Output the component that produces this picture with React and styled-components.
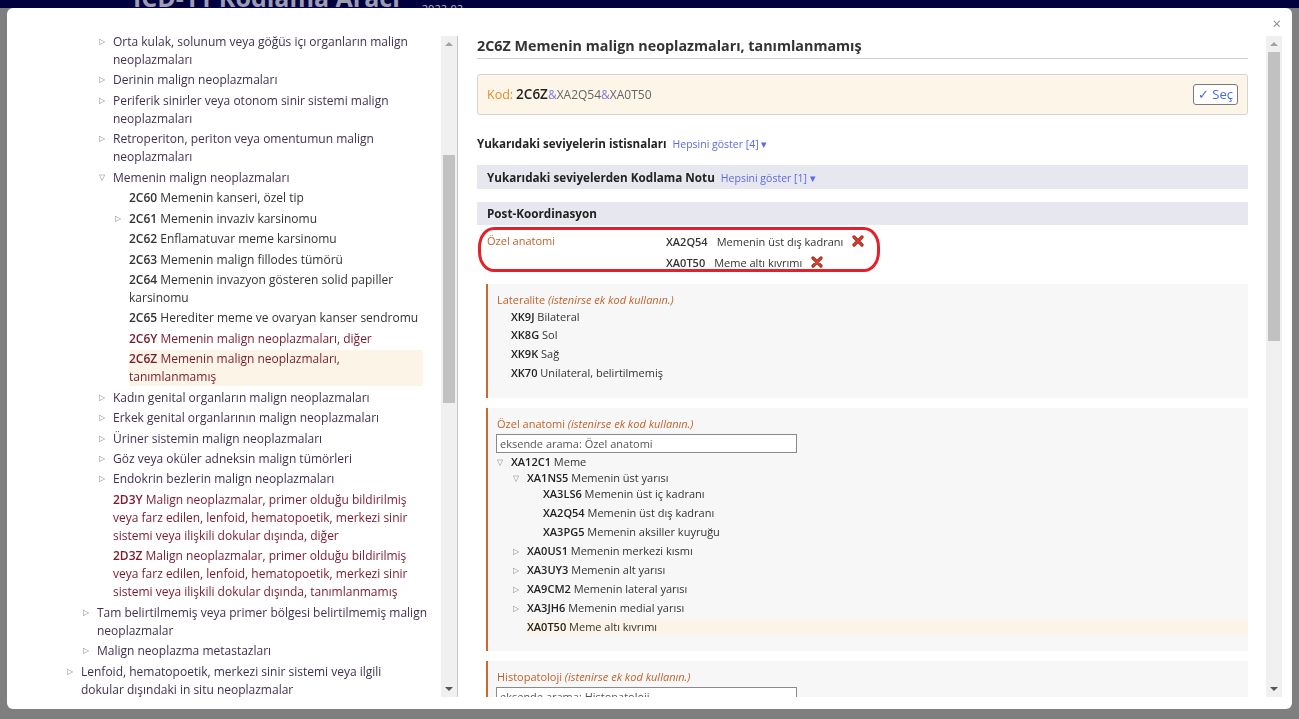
import React from 'react'
import styled, { createGlobalStyle } from 'styled-components'

const GlobalStyle = createGlobalStyle`
html, body {
  margin:0;
  padding:0;
  height:100%;
}
body {
  background:#7f7f7f;
  font-family:"Open Sans", "Liberation Sans", sans-serif;
  overflow:hidden;
}
`

// each label is stored with its line breaks, as the tree shows it
const leftRows = [
  { level: 2, toggle: 'closed', lines: ['Orta kulak, solunum veya göğüs içı organların malign', 'neoplazmaları'] },
  { level: 2, toggle: 'closed', lines: ['Derinin malign neoplazmaları'] },
  { level: 2, toggle: 'closed', lines: ['Periferik sinirler veya otonom sinir sistemi malign', 'neoplazmaları'] },
  { level: 2, toggle: 'closed', lines: ['Retroperiton, periton veya omentumun malign', 'neoplazmaları'] },
  { level: 2, toggle: 'open', lines: ['Memenin malign neoplazmaları'] },
  { level: 3, code: '2C60', lines: ['Memenin kanseri, özel tip'] },
  { level: 3, toggle: 'closed', code: '2C61', lines: ['Memenin invaziv karsinomu'] },
  { level: 3, code: '2C62', lines: ['Enflamatuvar meme karsinomu'] },
  { level: 3, code: '2C63', lines: ['Memenin malign fillodes tümörü'] },
  { level: 3, code: '2C64', lines: ['Memenin invazyon gösteren solid papiller', 'karsinomu'] },
  { level: 3, code: '2C65', lines: ['Herediter meme ve ovaryan kanser sendromu'] },
  { level: 3, code: '2C6Y', lines: ['Memenin malign neoplazmaları, diğer'], residual: true },
  { level: 3, code: '2C6Z', lines: ['Memenin malign neoplazmaları,', 'tanımlanmamış'], residual: true, selected: true },
  { level: 2, toggle: 'closed', lines: ['Kadın genital organların malign neoplazmaları'] },
  { level: 2, toggle: 'closed', lines: ['Erkek genital organlarının malign neoplazmaları'] },
  { level: 2, toggle: 'closed', lines: ['Üriner sistemin malign neoplazmaları'] },
  { level: 2, toggle: 'closed', lines: ['Göz veya oküler adneksin malign tümörleri'] },
  { level: 2, toggle: 'closed', lines: ['Endokrin bezlerin malign neoplazmaları'] },
  {
    level: 2, code: '2D3Y', residual: true,
    lines: ['Malign neoplazmalar, primer olduğu bildirilmiş', 'veya farz edilen, lenfoid, hematopoetik, merkezi sinir', 'sistemi veya ilişkili dokular dışında, diğer'],
  },
  {
    level: 2, code: '2D3Z', residual: true,
    lines: ['Malign neoplazmalar, primer olduğu bildirilmiş', 'veya farz edilen, lenfoid, hematopoetik, merkezi sinir', 'sistemi veya ilişkili dokular dışında, tanımlanmamış'],
  },
  { level: 1, toggle: 'closed', lines: ['Tam belirtilmemiş veya primer bölgesi belirtilmemiş malign', 'neoplazmalar'] },
  { level: 1, toggle: 'closed', lines: ['Malign neoplazma metastazları'] },
  { level: 0, toggle: 'closed', lines: ['Lenfoid, hematopoetik, merkezi sinir sistemi veya ilgili', 'dokular dışındaki in situ neoplazmalar'] },
]

const postValues = [
  { code: 'XA2Q54', text: 'Memenin üst dış kadranı' },
  { code: 'XA0T50', text: 'Meme altı kıvrımı' },
]

const laterality = [
  { code: 'XK9J', text: 'Bilateral' },
  { code: 'XK8G', text: 'Sol' },
  { code: 'XK9K', text: 'Sağ' },
  { code: 'XK70', text: 'Unilateral, belirtilmemiş' },
]

const anatomy = [
  { level: 0, toggle: 'open', code: 'XA12C1', text: 'Meme' },
  { level: 1, toggle: 'open', code: 'XA1NS5', text: 'Memenin üst yarısı' },
  { level: 2, code: 'XA3LS6', text: 'Memenin üst iç kadranı' },
  { level: 2, code: 'XA2Q54', text: 'Memenin üst dış kadranı' },
  { level: 2, code: 'XA3PG5', text: 'Memenin aksiller kuyruğu' },
  { level: 1, toggle: 'closed', code: 'XA0US1', text: 'Memenin merkezi kısmı' },
  { level: 1, toggle: 'closed', code: 'XA3UY3', text: 'Memenin alt yarısı' },
  { level: 1, toggle: 'closed', code: 'XA9CM2', text: 'Memenin lateral yarısı' },
  { level: 1, toggle: 'closed', code: 'XA3JH6', text: 'Memenin medial yarısı' },
  { level: 1, code: 'XA0T50', text: 'Meme altı kıvrımı', selected: true },
]

function ScrollBar({ offset, size }) {
  return (
    <Bar>
      <ScrollArrow />
      <ScrollTrack>
        <ScrollThumb $offset={offset} $size={size} />
      </ScrollTrack>
      <ScrollArrow $down />
    </Bar>
  )
}

function RemoveIcon() {
  return (
    <RemoveButton>
      <svg width="12" height="12" viewBox="0 0 12 12">
        <path d="M2 2 L10 10 M10 2 L2 10" stroke="#a3241a" strokeWidth="3.2" strokeLinecap="round" />
        <path d="M2 2 L10 10 M10 2 L2 10" stroke="#d8452f" strokeWidth="1.6" strokeLinecap="round" />
      </svg>
    </RemoveButton>
  )
}

function toggleGlyph(t) {
  if (t === 'open') return '▽'
  if (t === 'closed') return '▷'
  return ''
}

function App() {
  return (
    <>
      <GlobalStyle />
      <Header>
        <SiteTitle>ICD-11 Kodlama Aracı</SiteTitle>
        <Version>2022-02</Version>
      </Header>
      <Modal>
        <Close>×</Close>
        <Body>
          <LeftPane>
            <TreeArea>
              <TreeList>
                {leftRows.map((r, i) => (
                  <Row key={i} $level={r.level}>
                    <Toggle>{toggleGlyph(r.toggle)}</Toggle>
                    <Label $kind={r.residual ? 'residual' : r.code ? 'code' : 'block'} $selected={r.selected}>
                      {r.lines.map((line, j) => (
                        <Line key={j}>
                          {j === 0 && r.code && <LeftCode>{r.code} </LeftCode>}
                          {line}
                        </Line>
                      ))}
                    </Label>
                  </Row>
                ))}
              </TreeList>
            </TreeArea>
            <ScrollBar offset={103} size={248} />
          </LeftPane>

          <RightPane>
            <Content>
              <Title>2C6Z Memenin malign neoplazmaları, tanımlanmamış</Title>

              <CodeBox>
                <CodeLine>
                  <KodLabel>Kod:</KodLabel>
                  <MainCode>2C6Z</MainCode>
                  <Amp>&amp;</Amp>
                  <ExtCode>XA2Q54</ExtCode>
                  <Amp>&amp;</Amp>
                  <ExtCode>XA0T50</ExtCode>
                </CodeLine>
                <SelectButton>✓ Seç</SelectButton>
              </CodeBox>

              <SectionHead>
                Yukarıdaki seviyelerin istisnaları
                <ShowAll>Hepsini göster [4] ▾</ShowAll>
              </SectionHead>

              <Band $top={12} $height={24}>
                Yukarıdaki seviyelerden Kodlama Notu
                <ShowAll>Hepsini göster [1] ▾</ShowAll>
              </Band>

              <Band $top={13} $height={23}>Post-Koordinasyon</Band>

              <PostCoordBox>
                <AxisLabel>Özel anatomi</AxisLabel>
                <div>
                  {postValues.map(v => (
                    <ValueRow key={v.code}>
                      <ValueCode>{v.code}</ValueCode>
                      <span>{v.text}</span>
                      <RemoveIcon />
                    </ValueRow>
                  ))}
                </div>
              </PostCoordBox>

              <AxisPanel $top={12} $bottom={16}>
                <AxisTitle>Lateralite <em>(istenirse ek kod kullanın.)</em></AxisTitle>
                {laterality.map(l => (
                  <LatItem key={l.code}><AxisCode>{l.code}</AxisCode> {l.text}</LatItem>
                ))}
              </AxisPanel>

              <AxisPanel $top={10} $bottom={13}>
                <AxisTitle>Özel anatomi <em>(istenirse ek kod kullanın.)</em></AxisTitle>
                <SearchInput placeholder="eksende arama: Özel anatomi" />
                {anatomy.map(a => (
                  <AxisRow key={a.code} $level={a.level} $open={a.toggle === 'open'}>
                    <AxisToggle>{toggleGlyph(a.toggle)}</AxisToggle>
                    <AxisLabelText $selected={a.selected}>
                      <AxisCode>{a.code}</AxisCode> {a.text}
                    </AxisLabelText>
                  </AxisRow>
                ))}
              </AxisPanel>

              <AxisPanel $top={10} $bottom={13}>
                <AxisTitle>Histopatoloji <em>(istenirse ek kod kullanın.)</em></AxisTitle>
                <SearchInput placeholder="eksende arama: Histopatoloji" />
              </AxisPanel>
            </Content>
            <ScrollBar offset={0} size={289} />
          </RightPane>
        </Body>
      </Modal>
    </>
  )
}

export default App

const Header = styled.div`
height:8px;
overflow:hidden;
background:#00003f;
display:flex;
align-items:flex-end;
padding-left:133px;
`
const SiteTitle = styled.div`
font-size:25px;
font-weight:700;
line-height:26px;
margin-bottom:-2px;
color:#9d9db4;
white-space:nowrap;
`
const Version = styled.div`
align-self:flex-start;
margin:3px 0 0 22px;
font-size:11px;
line-height:12px;
color:#b8b8c4;
`
const Modal = styled.div`
position:fixed;
top:8px;
left:7px;
right:7px;
bottom:10px;
background:#fff;
border-radius:6px;
padding-top:28px;
box-sizing:border-box;
`
const Close = styled.div`
position:absolute;
top:7px;
right:11px;
font-size:15px;
line-height:16px;
color:#8a8a8a;
`
const Body = styled.div`
display:flex;
height:661px;
`
const LeftPane = styled.div`
width:451px;
flex:0 0 451px;
display:flex;
border-right:1px solid #c9c9c9;
box-sizing:border-box;
`
const TreeArea = styled.div`
flex:1;
overflow:hidden;
padding-right:18px;
`
const TreeList = styled.div`
margin-top:-3px;
`
const Row = styled.div`
display:flex;
padding-left:${p => 60 + p.$level * 16}px;
margin-bottom:2.45px;
`
const Toggle = styled.span`
flex:0 0 14px;
font-size:8px;
line-height:16px;
color:#8c8c8c;
`
const labelColors = { block: '#3f3150', code: '#333', residual: '#7a1a2c' }
const Label = styled.div`
flex:1;
font-size:12px;
line-height:18px;
color:${p => labelColors[p.$kind]};
background:${p => (p.$selected ? '#fdf4e8' : 'transparent')};
`
const Line = styled.div`
white-space:nowrap;
`
const LeftCode = styled.span`
font-weight:600;
`
const Bar = styled.div`
flex:0 0 16px;
width:16px;
background:#f0f0f0;
display:flex;
flex-direction:column;
`
const ScrollArrow = styled.div`
height:16px;
flex:0 0 16px;
display:flex;
align-items:center;
justify-content:center;
&::after{
  content:"";
  border-left:4px solid transparent;
  border-right:4px solid transparent;
  ${p => (p.$down ? 'border-top:4px solid #555;' : 'border-bottom:4px solid #a3a3a3;')}
}
`
const ScrollTrack = styled.div`
flex:1;
`
const ScrollThumb = styled.div`
margin:${p => p.$offset}px 2px 0 2px;
height:${p => p.$size}px;
background:#c1c1c1;
`
const RightPane = styled.div`
flex:1;
display:flex;
padding-right:10px;
`
const Content = styled.div`
flex:1;
overflow:hidden;
padding:0 18px 0 19px;
color:#333;
`
const Title = styled.h2`
margin:0;
font-size:14.3px;
font-weight:700;
line-height:20px;
padding-bottom:1.5px;
border-bottom:1px solid #cfcfcf;
color:#333;
`
const CodeBox = styled.div`
margin-top:15px;
height:41px;
box-sizing:border-box;
display:flex;
align-items:center;
justify-content:space-between;
padding:0 9px;
background:#fef5e9;
border:1px solid #d4d4d4;
border-radius:3px;
`
const CodeLine = styled.div`
display:flex;
align-items:baseline;
`
const KodLabel = styled.span`
font-size:12.5px;
color:#e58a2c;
margin-right:3px;
`
const MainCode = styled.span`
font-size:13.5px;
font-weight:600;
color:#222;
`
const Amp = styled.span`
font-size:12px;
color:#7b7be6;
`
const ExtCode = styled.span`
font-size:12px;
color:#666;
`
const SelectButton = styled.button`
height:21px;
padding:0 4px;
border:1px solid #7a7a7a;
border-radius:3px;
background:#fff;
font-family:inherit;
font-size:13px;
line-height:18px;
color:#4d66e3;
`
const SectionHead = styled.div`
margin-top:20px;
font-size:11.6px;
font-weight:700;
line-height:18px;
color:#222;
`
const ShowAll = styled.span`
margin-left:6px;
font-size:10.5px;
font-weight:400;
color:#5b6ae6;
`
const Band = styled.div`
margin-top:${p => p.$top}px;
height:${p => p.$height}px;
line-height:${p => p.$height}px;
padding-left:10px;
background:#e7e7f0;
font-size:11.7px;
font-weight:700;
color:#222;
`
const PostCoordBox = styled.div`
margin:2px 0 0 1px;
width:402px;
height:45px;
box-sizing:border-box;
border:3px solid #e4202a;
border-radius:16px / 20px;
padding:1px 0 0 6px;
display:grid;
grid-template-columns:179px auto;
font-size:11px;
`
const AxisLabel = styled.div`
line-height:19px;
color:#c0622c;
`
const ValueRow = styled.div`
display:flex;
align-items:center;
height:21px;
color:#333;
`
const ValueCode = styled.span`
font-weight:600;
margin-right:9px;
`
const RemoveButton = styled.span`
display:inline-flex;
margin-left:9px;
`
const AxisPanel = styled.div`
margin:${p => p.$top}px 0 0 9px;
padding:8px 0 ${p => p.$bottom}px 9px;
background:#f7f7f7;
border-left:2px solid #c66a30;
font-size:11px;
`
const AxisTitle = styled.div`
line-height:16px;
color:#c0622c;
em{
  font-style:italic;
}
`
const LatItem = styled.div`
padding-left:14px;
line-height:18.7px;
color:#333;
`
const AxisCode = styled.span`
font-weight:600;
color:#222;
`
const SearchInput = styled.input`
display:block;
margin:2px 0 1px -1px;
width:301px;
height:19px;
box-sizing:border-box;
border:1px solid #8a8a8a;
padding:0 3px;
font-family:inherit;
font-size:11px;
background:#fff;
&::placeholder{
  color:#555;
}
`
const AxisRow = styled.div`
display:flex;
padding-left:${p => p.$level * 16}px;
margin-bottom:${p => (p.$open ? 0 : 3)}px;
`
const AxisToggle = styled.span`
flex:0 0 14px;
font-size:8px;
line-height:15px;
color:#8c8c8c;
`
const AxisLabelText = styled.div`
flex:1;
line-height:16px;
color:#333;
background:${p => (p.$selected ? '#fdf4e8' : 'transparent')};
`
